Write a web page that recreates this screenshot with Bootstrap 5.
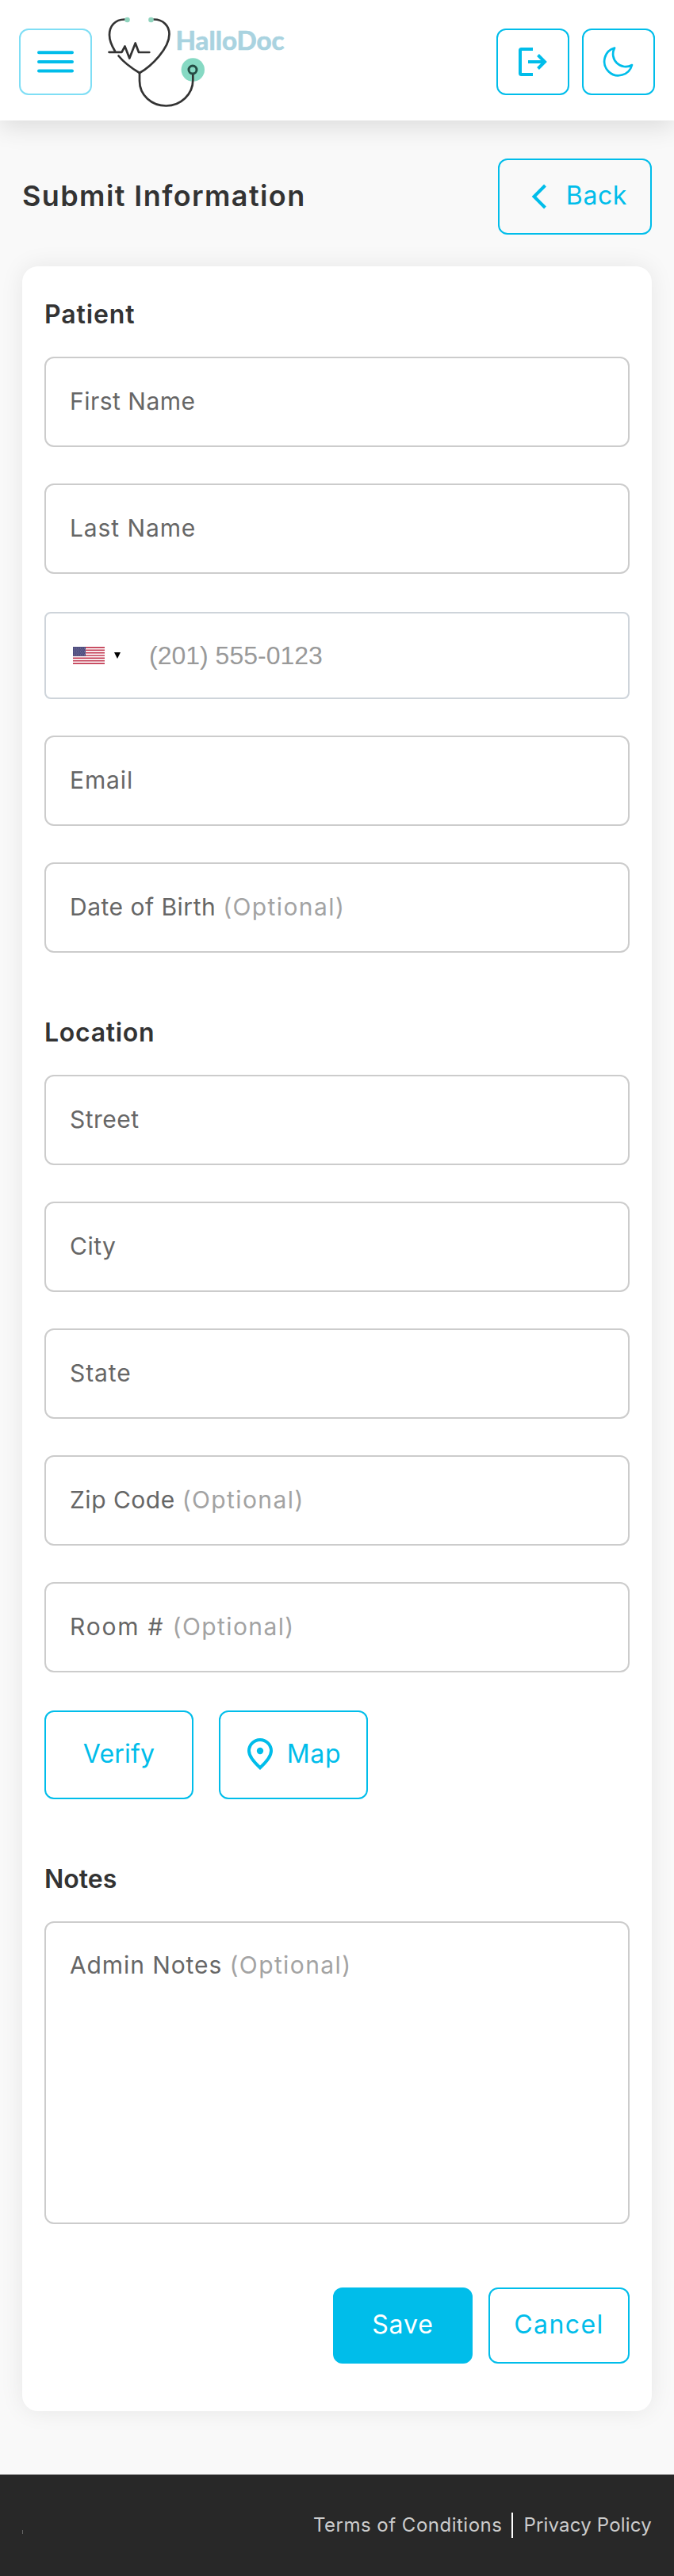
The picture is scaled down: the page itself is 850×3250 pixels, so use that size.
<!DOCTYPE html>
<html lang="en">
<head>
<meta charset="utf-8">
<meta name="viewport" content="width=device-width, initial-scale=1">
<title>HalloDoc - Submit Information</title>
<link href="https://cdn.jsdelivr.net/npm/bootstrap@5.3.0/dist/css/bootstrap.min.css" rel="stylesheet">
<style>
  :root { --brand: #00bdea; --line: #ccc; }
  body { background: #f9f9f9; color: #333; font-family: "Inter", "Liberation Sans", sans-serif; font-size: 30px; line-height: 1.2; }
  .topbar { height: 152px; padding: 4px 24px 0; background: #fff; box-shadow: 0 8px 30px rgba(0,0,0,.12); position: relative; }
  .btn { --bs-btn-color: var(--brand); --bs-btn-border-color: var(--brand); --bs-btn-border-width: 2px; --bs-btn-border-radius: 12px; --bs-btn-font-size: 32px; --bs-btn-line-height: 1.2; --bs-btn-padding-y: 0; --bs-btn-padding-x: 0; letter-spacing: .6px; }
  .btn-tool { width: 92px; height: 84px; }
  .btn-menu { --bs-btn-border-color: #7fdef5; }
  .logo { width: 240px; height: 136px; margin-left: 16px; }
  .page-main { padding: 48px 28px 80px; }
  .page-title { font-size: 36px; font-weight: 600; letter-spacing: 1.4px; margin: 0; }
  .btn-back { width: 194px; height: 96px; padding: 0 29px 1px 38px; }
  .panel { margin-top: 40px; padding: 28px 28px 60px; height: 2706px; background: #fff; border-radius: 20px; box-shadow: 0 0 30px rgba(0,0,0,.08); }
  .section-title { font-size: 32px; font-weight: 600; line-height: 40px; height: 40px; margin: 13px 0 33px; }
  .section-gap { margin-top: 81px; }
  .wide { letter-spacing: .9px; }
  .snug { letter-spacing: .7px; }
  .field-stack { display: grid; gap: 46px; }
  .form-floating > .form-control, .phone-box { height: 114px; border: 2px solid var(--line); border-radius: 12px; background: #fff; }
  .form-floating > .form-control { padding: 0 31px; font-size: 30px; }
  .form-floating > label { display: flex; align-items: center; padding: 0 0 3px 32px; border: 0; font-size: 30px; color: #666; letter-spacing: .5px; white-space: pre; }
  .form-floating > label span { color: #a3a3a3; letter-spacing: 1.4px; }
  .form-floating > .wide-label { letter-spacing: .9px; }
  .form-floating > .room-label { letter-spacing: 1.8px; }
  .form-floating > .notes { height: 382px; resize: none; }
  .form-floating > .notes + label { align-items: flex-start; padding-top: 37px; }
  .phone-box { height: 110px; border-color: #ced4da; border-radius: 8px; margin: 2px 0 0; padding-left: 34px; }
  .phone-box .form-control { border: 0; height: 100%; padding: 0; font: 32px "Liberation Sans", sans-serif; background: transparent; }
  .phone-box .form-control::placeholder { color: #999; opacity: 1; }
  .caret { margin: 0 36px 0 12px; }
  .btn-place { width: 188px; height: 112px; padding-bottom: 2px; }
  .verify { letter-spacing: .2px; }
  .pin { margin: 0 10px 0 -6px; }
  .btn-save { width: 176px; height: 96px; --bs-btn-bg: var(--brand); --bs-btn-color: #fff; letter-spacing: .9px; padding-bottom: 1px; }
  .btn-cancel { width: 178px; height: 96px; letter-spacing: 1.4px; padding-bottom: 1px; }
  .form-actions { gap: 20px; margin-top: 80px; }
  .place-actions { gap: 32px; }
  .page-foot { height: 128px; background: #282828; padding: 0 28px; font-size: 24px; }
  .page-foot a { color: #ccc; text-decoration: none; }
  .terms { letter-spacing: .5px; }
  .privacy { letter-spacing: .2px; }
  .bar { width: 2px; height: 32px; background: #fff; margin: 0 13px 0 12px; }
  .tick { width: 1px; height: 5px; background: #666; margin-top: 16px; }
</style>
</head>
<body>
<header class="topbar d-flex align-items-center">
  <button class="btn btn-tool btn-menu d-flex align-items-center justify-content-center" aria-label="Menu">
    <svg width="46" height="28" viewBox="0 0 46 28" stroke="#00bdea" stroke-width="4" stroke-linecap="round"><path d="M2 2.3H44M2 14H44M2 25.6H44"/></svg>
  </button>
  <svg class="logo" viewBox="132 10 240 136" fill="none" stroke="#333" stroke-width="2.7" stroke-linecap="round" stroke-linejoin="round">
    <circle cx="243.3" cy="88" r="14.7" fill="#86d9c3" stroke="none"/>
    <path d="M157 24.5C145 24.5 138 33 138 44C138 51 141 58 145 64.5M149.500 70.500C156 78.500 166 86 176 92C191 83.500 213.500 61 213.500 43C213.500 33 206 24.500 194 24.500"/>
    <path d="M137.500 65.800H153.500L157.500 58.500L163.300 73.500L170.700 54.500L175 66H188.300"/>
    <path d="M176 92V102C176 120 191 133.500 209.500 133.500S243.300 119 243.300 101V94"/>
    <circle cx="243" cy="88" r="5" stroke="#244c44" stroke-width="3"/>
    <g fill="#8fd3bd" stroke="none"><circle cx="160.500" cy="25" r="3.300"/><circle cx="190.500" cy="25" r="3.300"/></g>
    <text x="221.500" y="62.700" textLength="137" lengthAdjust="spacingAndGlyphs" font-family="Lato, sans-serif" font-size="32" font-weight="700" fill="#a9d3e0" stroke="#a9d3e0" stroke-width=".7">HalloDoc</text>
  </svg>
  <div class="d-flex ms-auto gap-3">
    <button class="btn btn-tool d-flex align-items-center justify-content-center" aria-label="Log out">
      <svg width="36" height="36" viewBox="0 0 36 36" fill="none" stroke="#00bdea" stroke-width="4"><path d="M18 2H3.500Q2 2 2 3.500V32.500Q2 34 3.500 34H18M12 18H32"/><path d="M24.500 9.500L33 18L24.500 26.500"/></svg>
    </button>
    <button class="btn btn-tool d-flex align-items-center justify-content-center" aria-label="Dark mode">
      <svg width="40" height="40" viewBox="759.500 58 40 40" fill="none" stroke="#00bdea" stroke-width="2.700" stroke-linejoin="round"><path d="M774.500 60.500A17.700 17.700 0 1 0 796.500 82A16 16 0 0 1 774.500 60.500Z"/></svg>
    </button>
  </div>
</header>

<main class="page-main">
  <div class="d-flex align-items-center justify-content-between">
    <h1 class="page-title">Submit Information</h1>
    <a href="#" class="btn btn-back d-flex align-items-center justify-content-between">
      <svg width="24" height="34" viewBox="0 0 24 34" fill="none" stroke="#00bdea" stroke-width="4"><path d="M19.500 3L5.500 17L19.500 31"/></svg>
      <span>Back</span>
    </a>
  </div>

  <form class="panel">
    <h2 class="section-title wide">Patient</h2>
    <div class="field-stack">
      <div class="form-floating"><input class="form-control" id="first" placeholder=" "><label for="first">First Name</label></div>
      <div class="form-floating"><input class="form-control" id="last" placeholder=" "><label class="wide-label" for="last">Last Name</label></div>
      <div class="phone-box d-flex align-items-center">
        <svg class="flex-shrink-0" width="40" height="22" viewBox="0 0 40 22"><rect width="40" height="22" fill="#fff"/><path d="M0 .85H40M0 4.230H40M0 7.620H40M0 11H40M0 14.380H40M0 17.770H40M0 21.150H40" stroke="#c23a52" stroke-width="1.700"/><rect width="16" height="11.800" fill="#4d4b7d"/><path d="M1 2H16M2 4H16M1 6H16M2 8H16M1 10H16" stroke="#9b9abb" stroke-width=".8" stroke-dasharray="1 1.600"/></svg>
        <svg class="caret flex-shrink-0" width="8" height="8" viewBox="0 0 8 8"><path d="M0 0H8L4 8Z"/></svg>
        <input class="form-control" type="tel" placeholder="(201) 555-0123" aria-label="Phone">
      </div>
      <div class="form-floating"><input class="form-control" id="email" placeholder=" "><label class="wide-label" for="email">Email</label></div>
      <div class="form-floating"><input class="form-control" id="dob" placeholder=" "><label for="dob">Date of Birth <span>(Optional)</span></label></div>
    </div>

    <h2 class="section-title section-gap snug">Location</h2>
    <div class="field-stack">
      <div class="form-floating"><input class="form-control" id="street" placeholder=" "><label for="street">Street</label></div>
      <div class="form-floating"><input class="form-control" id="city" placeholder=" "><label for="city">City</label></div>
      <div class="form-floating"><input class="form-control" id="state" placeholder=" "><label class="wide-label" for="state">State</label></div>
      <div class="form-floating"><input class="form-control" id="zip" placeholder=" "><label for="zip">Zip Code <span>(Optional)</span></label></div>
      <div class="form-floating"><input class="form-control" id="room" placeholder=" "><label class="room-label" for="room">Room # <span>(Optional)</span></label></div>
    </div>
    <div class="place-actions d-flex mt-5">
      <button type="button" class="btn btn-place verify">Verify</button>
      <button type="button" class="btn btn-place d-flex align-items-center justify-content-center">
        <svg class="pin" width="48" height="48" viewBox="0 0 24 24" fill="none" stroke="#00bdea" stroke-width="2"><path d="M12 20.600C7.500 16.500 5 13 5 10A7 7 0 0 1 19 10C19 13 16.500 16.500 12 20.600Z"/><circle cx="12" cy="10" r="2.100" fill="#00bdea" stroke="none"/></svg>
        <span>Map</span>
      </button>
    </div>

    <h2 class="section-title section-gap">Notes</h2>
    <div class="form-floating"><textarea class="form-control notes" id="notes" placeholder=" "></textarea><label class="wide-label" for="notes">Admin Notes <span>(Optional)</span></label></div>
    <div class="form-actions d-flex justify-content-end">
      <button type="button" class="btn btn-save">Save</button>
      <button type="button" class="btn btn-cancel">Cancel</button>
    </div>
  </form>
</main>

<footer class="page-foot d-flex align-items-center">
  <span class="tick"></span>
  <a href="#" class="terms ms-auto">Terms of Conditions</a>
  <span class="bar"></span>
  <a href="#" class="privacy">Privacy Policy</a>
</footer>
<script src="https://cdn.jsdelivr.net/npm/bootstrap@5.3.0/dist/js/bootstrap.bundle.min.js"></script>
</body>
</html>
